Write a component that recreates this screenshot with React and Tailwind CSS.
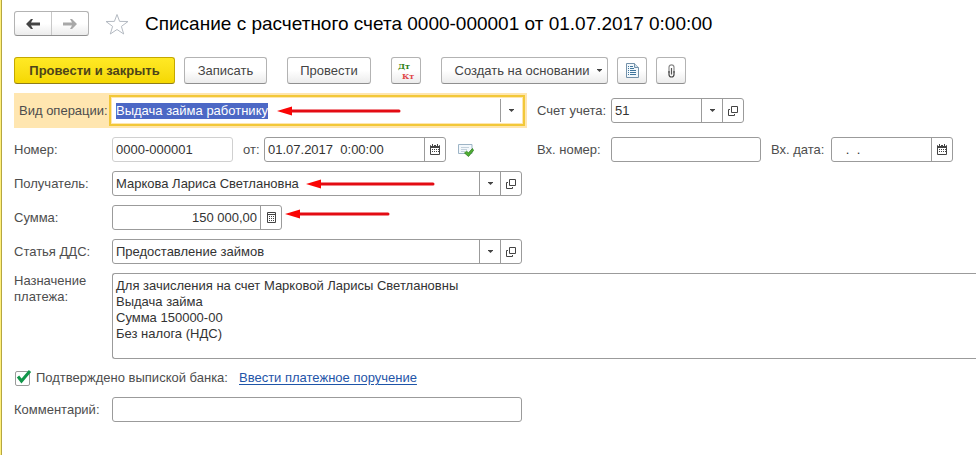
import React, { useEffect, useRef, useState } from "react";
import clsx from "clsx";

const CaretIcon = () => (
  <svg width="5" height="3" viewBox="0 0 5 3" className="shrink-0">
    <path d="M0 0h5v0.500L2.500 3 0 0.500z" fill="#444" />
  </svg>
);

const OpenIcon = () => (
  <svg width="10" height="10" viewBox="0 0 10 10" fill="none" stroke="#444">
    <path d="M3.5 0.5h6v6h-6z" />
    <path d="M2 3.5H0.5v6h6V8" />
  </svg>
);

const CalendarIcon = () => (
  <svg width="10" height="11" viewBox="0 0 10 11">
    <path d="M1 1h8a1 1 0 0 1 1 1v8a1 1 0 0 1-1 1H1a1 1 0 0 1-1-1V2a1 1 0 0 1 1-1z" fill="#444" />
    <path d="M1 4h8v6H1z" fill="#fff" />
    <path d="M2 0h1v2H2zM7 0h1v2H7z" fill="#444" />
    <path d="M1 1h1v1H1zM3 1h1v1H3zM6 1h1v1H6zM8 1h1v1H8z" fill="#fff" />
    <path d="M2 5h1v1H2zM4 5h1v1H4zM6 5h1v1H6zM8 5h1v1H8zM2 7h1v1H2zM4 7h1v1H4zM6 7h1v1H6zM8 7h1v1H8z" fill="#444" />
  </svg>
);

const CalculatorIcon = () => (
  <svg width="9" height="11" viewBox="0 0 9 11">
    <path d="M0.5 0.5h8v10h-8z" fill="#fff" stroke="#444" />
    <path d="M1 2h7v1H1zM2 4h1v1H2zM4 4h1v1H4zM6 4h1v1H6zM2 6h1v1H2zM4 6h1v1H4zM6 6h1v1H6zM2 8h1v1H2zM4 8h1v1H4zM6 8h1v1H6z" fill="#444" />
  </svg>
);

const ArrowIcon = ({ back }) => (
  <svg width="14" height="10" viewBox="0 0 14 10">
    {back ? (
      <path d="M0 5L5 0h2L5 3.500h9v3H5L7 10H5z" fill="#444" />
    ) : (
      <path d="M14 5L9 0H7l2 3.500H0v3h9L7 10h2z" fill="#a8a8a8" />
    )}
  </svg>
);

const StarIcon = () => (
  <svg width="24" height="22" viewBox="0 0 24 22" fill="#fff" stroke="#b4bac2">
    <path d="M12 1.5l2.600 6.900 8.400.1-6.600 4.900 2.300 7.600-6.700-4.500-6.700 4.500 2.300-7.600L1 8.500l8.400-.1z" />
  </svg>
);

const ReportIcon = () => (
  <svg width="13" height="15" viewBox="0 0 13 15">
    <path d="M0.500 0.500h8l4 4v10h-12z" fill="#f2f8fc" stroke="#7592aa" />
    <path d="M8.500 0.500v4h4" fill="#cfdfea" stroke="#7592aa" />
    <path d="M2 3.500h1M4 3.500h3M2 5.500h1M4 5.500h4M2 7.500h1M4 7.500h6M2 9.500h1M4 9.500h6M2 11.500h1M4 11.500h6" stroke="#3f759c" />
  </svg>
);

const ClipIcon = () => (
  <svg width="7" height="14" viewBox="0 0 7 14" fill="none" strokeWidth="1.200">
    <path d="M1 9V3.300a2.500 2.500 0 0 1 5 0V9" stroke="#8c8c8c" />
    <path d="M1 7v3.500a2.500 2.500 0 0 0 5 0V7" stroke="#444" />
    <path d="M3.500 4v6.500" stroke="#555" />
  </svg>
);

const PostedIcon = () => (
  <svg width="16" height="14" viewBox="0 0 16 14">
    <path d="M0.500 1.500h13.500v9h-13.500z" fill="#f3f8fc" stroke="#9db4c6" />
    <path d="M3 4.500h8M3 6.500h6M3 8.500h4" stroke="#c3d1dc" />
    <path d="M6.500 10l2-1.800 2 1.600L14.500 5.500l1 2-5 6z" fill="#4fae33" stroke="#2d7d1c" strokeWidth="0.800" />
  </svg>
);

// Red pointer that lies over a field
const Pointer = ({ length, className }) => (
  <svg
    width={length}
    height="10"
    viewBox={`0 0 ${length} 10`}
    className={clsx("pointer-events-none absolute z-10", className)}
  >
    <path d={`M12 5H${length - 2}`} stroke="#e30b13" strokeWidth="3" strokeLinecap="round" />
    <path d="M0 5L15 0.500v9z" fill="#fa0505" />
  </svg>
);

const Field = ({
  id,
  value = "",
  className,
  buttons = [],
  focused,
  readOnly,
  alignRight,
  inputRef,
}) => {
  const [text, setText] = useState(value);

  return (
    <div
      className={clsx(
        "flex h-[25px] shrink-0 bg-white",
        focused
          ? "outline-2 outline-offset-1 outline-[#f2c838] ring-5 ring-[#ffe6b0]"
          : "rounded-[3px] border",
        !focused && (readOnly ? "border-[#d0d0d0]" : "border-[#9b9b9b]"),
        className
      )}
    >
      <input
        id={id}
        ref={inputRef}
        value={text}
        readOnly={readOnly}
        onChange={(e) => setText(e.target.value)}
        className={clsx(
          "w-0 min-w-0 flex-1 bg-transparent leading-4 whitespace-pre text-[#333] outline-none selection:bg-[#4c68c5] selection:text-white",
          focused ? "pl-1" : "pl-[3px]",
          alignRight && "pr-[3px] text-right"
        )}
      />
      {buttons.map(({ name, Icon }) => (
        <button
          key={name}
          type="button"
          aria-label={name}
          className={clsx(
            "flex w-[21px] shrink-0 items-center justify-center border-l border-[#9b9b9b]",
            focused && "my-px box-content"
          )}
        >
          <Icon />
        </button>
      ))}
    </div>
  );
};

const Label = ({ htmlFor, children, className = "w-[98px]" }) => (
  <label htmlFor={htmlFor} className={clsx("shrink-0 text-[#4d4d4d]", className)}>
    {children}
  </label>
);

const ToolButton = ({ children, primary, className, ...rest }) => (
  <button
    type="button"
    className={clsx(
      "flex h-[27px] shrink-0 items-center justify-center rounded-[3px] border",
      primary
        ? "border-[#c4a800] border-b-[#8f7d1a] bg-linear-to-b from-[#ffe924] to-[#f5d800] font-bold text-[#4d4419]"
        : "border-[#b3b3b3] border-b-[#8f8f8f] bg-linear-to-b from-white from-50% to-[#ececec] text-[#444]",
      className
    )}
    {...rest}
  >
    {children}
  </button>
);

const dropdown = { name: "Выбрать", Icon: CaretIcon };
const open = { name: "Открыть", Icon: OpenIcon };
const calendar = { name: "Календарь", Icon: CalendarIcon };
const calculator = { name: "Калькулятор", Icon: CalculatorIcon };

const purpose = `Для зачисления на счет Марковой Ларисы Светлановны
Выдача займа
Сумма 150000-00
Без налога (НДС)`;

const App = () => {
  const operationRef = useRef(null);
  const [confirmed, setConfirmed] = useState(true);

  // The operation type is active and selected when the form opens
  useEffect(() => {
    operationRef.current.focus();
    operationRef.current.select();
  }, []);

  return (
    <div className="flex min-h-screen overflow-hidden bg-white font-['Liberation_Sans',Arial,sans-serif] text-[13px] leading-4">
      <div className="w-[2px] shrink-0 border-r border-[#b5a642] bg-[#fff07a]" />

      <main className="min-w-0 flex-1 pt-[11px] pl-3">
        {/* Header */}
        <header className="flex h-[25px] items-center">
          <div className="flex h-[25px] w-[75px] shrink-0 rounded-[3px] border border-[#b3b3b3] border-b-[#8f8f8f] bg-linear-to-b from-white from-50% to-[#ececec]">
            <button type="button" aria-label="Назад" className="flex flex-1 items-center justify-center border-r border-[#c8c8c8]">
              <ArrowIcon back />
            </button>
            <button type="button" aria-label="Вперед" className="flex flex-1 items-center justify-center">
              <ArrowIcon />
            </button>
          </div>
          <button type="button" aria-label="В избранное" className="mx-4 shrink-0">
            <StarIcon />
          </button>
          <h1 className="text-[19px] leading-6 whitespace-nowrap text-black">
            Списание с расчетного счета 0000-000001 от 01.07.2017 0:00:00
          </h1>
        </header>

        {/* Toolbar */}
        <div className="mt-[21px] flex">
          <ToolButton primary className="w-[161px]">Провести и закрыть</ToolButton>
          <ToolButton className="ml-[9px] w-[83px]">Записать</ToolButton>
          <ToolButton className="ml-5 w-[84px]">Провести</ToolButton>
          <ToolButton className="ml-5 w-[30px]" aria-label="Дт Кт">
            <span className="flex flex-col font-['DejaVu_Serif',serif] text-[8px] leading-[10px] font-bold">
              <span className="text-left text-[#2c8015]">Дт</span>
              <span className="pl-1 text-[#e04545]">Кт</span>
            </span>
          </ToolButton>
          <ToolButton className="ml-5 w-[167px] gap-2 pl-2">
            Создать на основании
            <CaretIcon />
          </ToolButton>
          <ToolButton className="ml-[9px] w-[30px]" aria-label="Отчет">
            <ReportIcon />
          </ToolButton>
          <ToolButton className="ml-[9px] w-[30px]" aria-label="Файлы">
            <ClipIcon />
          </ToolButton>
        </div>

        {/* Form */}
        <form className="mt-[9px] flex flex-col gap-[9px]" onSubmit={(e) => e.preventDefault()}>
          <div className="flex items-center">
            <div className="flex h-[35px] items-center bg-[#ffe6b0]">
              <Label htmlFor="operation" className="w-[98px] pl-[5px]">Вид операции:</Label>
              <div className="relative">
                <Field
                  id="operation"
                  inputRef={operationRef}
                  value="Выдача займа работнику"
                  className="w-[410px]"
                  buttons={[dropdown]}
                  focused
                />
                <Pointer length={124} className="top-2 left-[165px]" />
              </div>
            </div>
            <Label htmlFor="account" className="ml-[15px] w-[74px]">Счет учета:</Label>
            <Field id="account" value="51" className="w-[133px]" buttons={[dropdown, open]} />
          </div>

          <div className="flex items-center">
            <Label htmlFor="number">Номер:</Label>
            <Field id="number" value="0000-000001" className="w-[121px]" readOnly />
            <Label htmlFor="date" className="ml-[10px] w-[21px]">от:</Label>
            <Field id="date" value="01.07.2017  0:00:00" className="w-[182px]" buttons={[calendar]} />
            <span className="ml-3 w-[79px] shrink-0">
              <PostedIcon />
            </span>
            <Label htmlFor="in-number" className="w-[74px]">Вх. номер:</Label>
            <Field id="in-number" className="w-[150px]" />
            <Label htmlFor="in-date" className="ml-[10px] w-[60px]">Вх. дата:</Label>
            <Field id="in-date" value="   .  ." className="w-[122px]" buttons={[calendar]} />
          </div>

          <div className="flex items-center">
            <Label htmlFor="payee">Получатель:</Label>
            <div className="relative">
              <Field id="payee" value="Маркова Лариса Светлановна" className="w-[410px]" buttons={[dropdown, open]} />
              <Pointer length={129} className="top-2 left-[194px]" />
            </div>
          </div>

          <div className="flex items-center">
            <Label htmlFor="amount">Сумма:</Label>
            <div className="relative">
              <Field id="amount" value="150 000,00" className="w-[170px]" buttons={[calculator]} alignRight />
              <Pointer length={105} className="top-1 left-[173px]" />
            </div>
          </div>

          <div className="flex items-center">
            <Label htmlFor="article">Статья ДДС:</Label>
            <Field id="article" value="Предоставление займов" className="w-[410px]" buttons={[dropdown, open]} />
          </div>

          <div className="flex">
            <Label htmlFor="purpose">
              Назначение
              <br />
              платежа:
            </Label>
            <textarea
              id="purpose"
              defaultValue={purpose}
              className="h-[86px] min-w-0 flex-1 resize-none rounded-l-[3px] border border-r-0 border-[#9b9b9b] pt-1 pl-[3px] leading-4 text-[#333] outline-none"
            />
          </div>

          <div className="flex h-5 items-center">
            <span className="relative ml-px flex">
              <input
                id="confirmed"
                type="checkbox"
                checked={confirmed}
                onChange={(e) => setConfirmed(e.target.checked)}
                className="size-[15px] appearance-none rounded-[2px] border border-[#9b9b9b] bg-white"
              />
              {confirmed && (
                <svg width="15" height="15" viewBox="0 0 15 15" className="pointer-events-none absolute inset-0 overflow-visible">
                  <path d="M3 5.500l3.500 4.500L15 0" fill="none" stroke="#12964a" strokeWidth="3" />
                </svg>
              )}
            </span>
            <Label htmlFor="confirmed" className="ml-[6px] w-[203px]">Подтверждено выпиской банка:</Label>
            <a href="#payment-order" className="text-[#1f55a8] underline underline-offset-2">
              Ввести платежное поручение
            </a>
          </div>

          <div className="flex items-center">
            <Label htmlFor="comment">Комментарий:</Label>
            <Field id="comment" className="w-[410px]" />
          </div>
        </form>
      </main>
    </div>
  );
};

export default App;
